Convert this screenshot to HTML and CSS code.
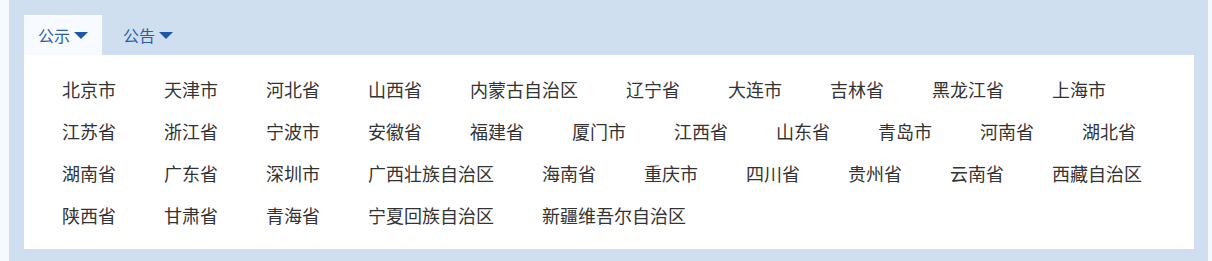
FILE: index.html
```html
<!DOCTYPE html>
<html lang="zh-CN">
<head>
<meta charset="utf-8">
<title>公示</title>
<link rel="stylesheet" href="styles.css">
</head>
<body>
<div class="frame">
  <div class="tabs">
    <div class="tab active">公示<span class="caret"></span></div>
    <div class="tab">公告<span class="caret"></span></div>
  </div>
  <div class="panel">
    <ul class="regions">
      <li>北京市</li><li>天津市</li><li>河北省</li><li>山西省</li><li>内蒙古自治区</li><li>辽宁省</li><li>大连市</li><li>吉林省</li><li>黑龙江省</li><li>上海市</li>
      <li>江苏省</li><li>浙江省</li><li>宁波市</li><li>安徽省</li><li>福建省</li><li>厦门市</li><li>江西省</li><li>山东省</li><li>青岛市</li><li>河南省</li><li>湖北省</li>
      <li>湖南省</li><li>广东省</li><li>深圳市</li><li>广西壮族自治区</li><li>海南省</li><li>重庆市</li><li>四川省</li><li>贵州省</li><li>云南省</li><li>西藏自治区</li>
      <li>陕西省</li><li>甘肃省</li><li>青海省</li><li>宁夏回族自治区</li><li>新疆维吾尔自治区</li>
    </ul>
  </div>
</div>
</body>
</html>
```
FILE: styles.css
```css
html, body {
  margin: 0;
  padding: 0;
  background: #f6f9fd;
  font-family: "Noto Sans CJK SC", "Noto Sans", sans-serif;
}
.frame {
  margin: 0 4px 0 9px;
  height: 261px;
  box-sizing: border-box;
  background: #cfdff0;
  padding: 15px 14px 12px 15px;
}
.tabs {
  display: flex;
  height: 40px;
}
.tab {
  display: flex;
  align-items: center;
  padding: 0 14px 0 14px;
  margin-right: 7px;
  font-size: 16px;
  color: #2a5ea8;
  line-height: 40px;
}
.tab.active {
  background: #f7fbff;
}
.caret {
  display: inline-block;
  width: 0;
  height: 0;
  margin-left: 4px;
  margin-top: 1px;
  border-left: 7px solid transparent;
  border-right: 7px solid transparent;
  border-top: 7px solid #1f57a8;
}
.panel {
  background: #ffffff;
  height: 194px;
  box-sizing: border-box;
  padding: 13px 10px 12px 38px;
}
.regions {
  list-style: none;
  margin: 0;
  padding: 0;
  display: flex;
  flex-wrap: wrap;
  column-gap: 48px;
}
.regions li {
  font-size: 18px;
  line-height: 42px;
  height: 42px;
  color: #333333;
  white-space: nowrap;
}
```
